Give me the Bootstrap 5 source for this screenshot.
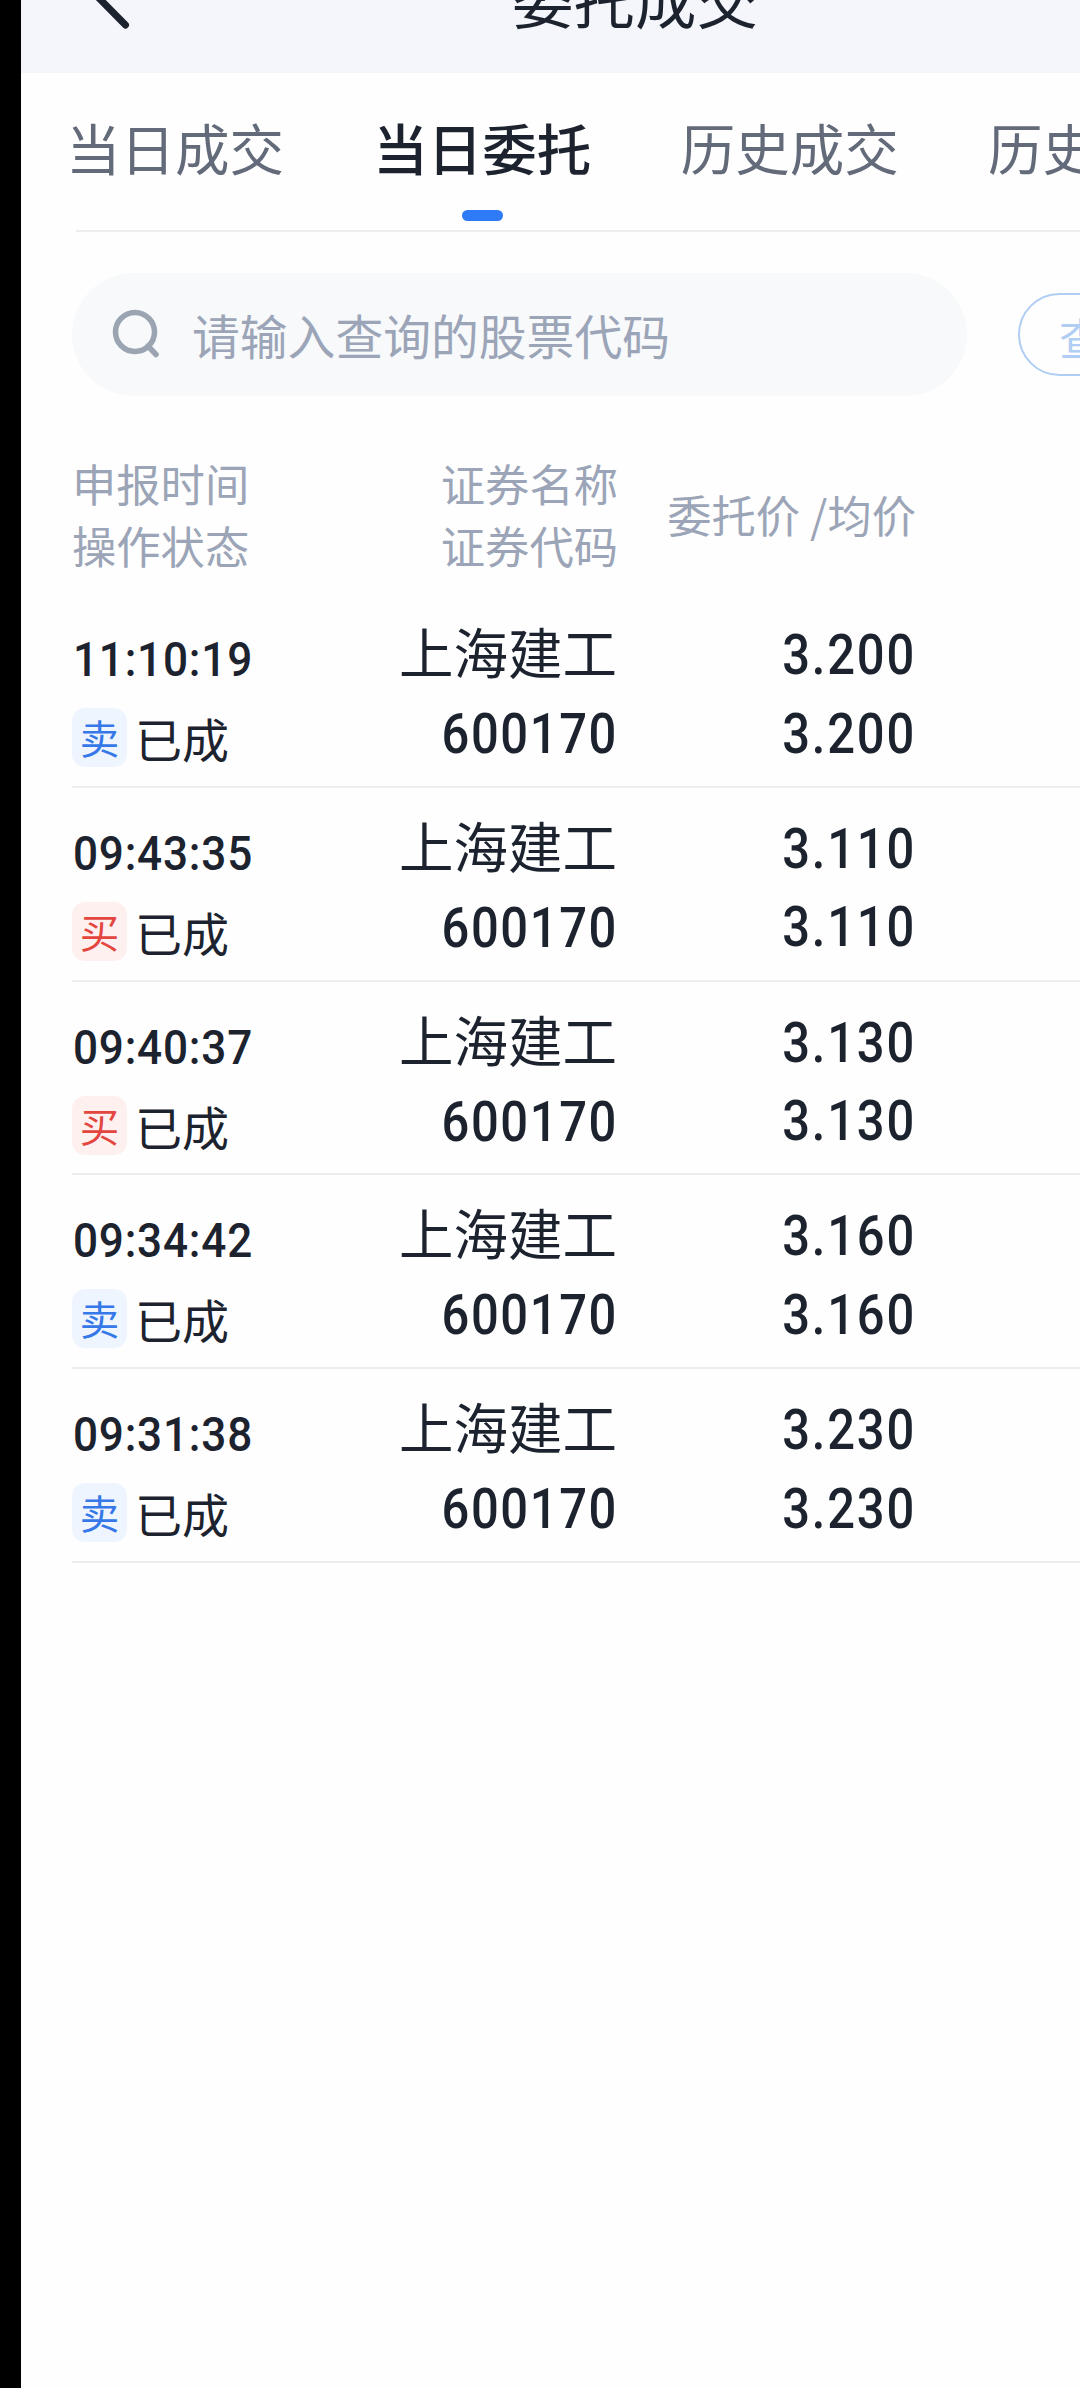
<!DOCTYPE html>
<html lang="zh-CN">
<head>
<meta charset="utf-8">
<meta name="viewport" content="width=device-width, initial-scale=1">
<title>委托成交</title>
<link href="https://cdn.jsdelivr.net/npm/bootstrap@5.3.0/dist/css/bootstrap.min.css" rel="stylesheet">
<style>
  body { background: #000; font-family: "Noto Sans CJK SC", sans-serif; color: #1c232f; overflow: hidden; }
  .screen { margin-left: 21px; height: 2388px; background: #fefefe; }
  .topbar { height: 73px; background: #f4f6fb; }
  .topbar svg { width: 60px; height: 73px; margin-left: 60px; }
  .page-title { font-size: 61.5px; line-height: 80px; margin: -42px 0 0 371px; }
  .tabs { height: 157px; padding-left: 45px; gap: 89.3px; }
  .tab { font-size: 54.5px; line-height: 60px; padding-top: 44px; color: #636b7a; border: 0; }
  .tab.active { color: #1c232f; font-weight: 500; }
  .tab .bar { width: 41px; height: 11px; border-radius: 6px; background: #2f7af6; margin-top: 33px; }
  .rule { height: 2px; background: #ededee; margin-left: 55px; }
  .search-row { padding: 41px 0 0 51px; gap: 51px; }
  .search-box { width: 895px; height: 123px; background: #f7f9fb; color: #9ba5b7; font-size: 47.8px; padding-left: 38px; gap: 30px; }
  .query-btn { width: 170px; height: 83px; border: 2px solid #b0cdf3; color: #b0cdf3; font-size: 44px; line-height: 85px; padding: 0 0 0 39px; text-align: left; }
  .cols { margin-left: 51px; }
  .c1 { width: 300px; }
  .c2 { width: 246px; }
  .c3 { width: 298px; }
  .heads { height: 142px; margin-top: 57px; margin-bottom: -1px; color: #9ba5b7; font-size: 44.3px; line-height: 61.5px; }
  .price-head { padding-top: 31px; }
  .order { height: 193.75px; border-bottom: 2px solid #ededee; }
  .stock { font-size: 54.5px; line-height: 78px; margin: 18px 1px 0 0; }
  .num { font-family: Roboto, sans-serif; font-weight: 500; font-size: 55px; line-height: 78.5px; letter-spacing: 1.8px; transform: scaleX(.89); transform-origin: right; }
  .code { margin-top: 5px; }
  .price { padding-top: 22px; letter-spacing: 2px; }
  .clock { font-family: Roboto, sans-serif; font-weight: 500; font-size: 49px; line-height: 60px; letter-spacing: .9px; transform: scaleX(.9); transform-origin: left; margin-top: 36px; padding-left: 1px; }
  .status { margin-top: 18px; }
  .side { width: 55px; height: 59px; border-radius: 13px; font-size: 39.5px; line-height: 58px; }
  .sell { background: #eff5ff; color: #3678e8; }
  .buy { background: #fff0f0; color: #e3463f; }
  .state { font-size: 47px; line-height: 59px; }
</style>
<script src="https://cdn.jsdelivr.net/npm/bootstrap@5.3.0/dist/js/bootstrap.bundle.min.js"></script>
</head>
<body>
<main class="screen overflow-hidden text-nowrap">
  <header class="topbar d-flex align-items-start overflow-hidden">
    <svg class="flex-shrink-0" viewBox="0 0 60 73" fill="none" stroke="#1c232f" stroke-width="7" stroke-linecap="round" stroke-linejoin="round"><path d="M45 -54 6 -14 44.500 25"/></svg>
    <h1 class="page-title fw-normal">委托成交</h1>
  </header>

  <nav class="tabs d-flex overflow-hidden">
    <div class="tab flex-shrink-0">当日成交</div>
    <div class="tab active flex-shrink-0 d-flex flex-column align-items-center">当日委托<span class="bar"></span></div>
    <div class="tab flex-shrink-0">历史成交</div>
    <div class="tab flex-shrink-0">历史委托</div>
  </nav>
  <div class="rule"></div>

  <div class="search-row d-flex align-items-center overflow-hidden">
    <div class="search-box rounded-pill d-flex align-items-center flex-shrink-0">
      <svg width="52" height="52" viewBox="0 0 52 52" fill="none" stroke="#9ba5b2" stroke-width="5.500"><circle cx="25" cy="23" r="19.500"/><path d="M38 37 46 45.500" stroke-linecap="round"/></svg>
      <span>请输入查询的股票代码</span>
    </div>
    <button class="query-btn btn rounded-pill flex-shrink-0">查询</button>
  </div>

  <section class="cols">
    <div class="heads d-flex align-items-start">
      <div class="c1">申报时间<br>操作状态</div>
      <div class="c2 text-end">证券名称<br>证券代码</div>
      <div class="c3 text-end price-head">委托价 /均价</div>
    </div>
    <div id="orders"></div>
  </section>
</main>
<script>
  const orders = [
    ["11:10:19", "卖", "3.200"],
    ["09:43:35", "买", "3.110"],
    ["09:40:37", "买", "3.130"],
    ["09:34:42", "卖", "3.160"],
    ["09:31:38", "卖", "3.230"]
  ];
  document.getElementById("orders").innerHTML = orders.map(([time, side, price]) => `
    <div class="order d-flex align-items-start">
      <div class="c1">
        <div class="clock">${time}</div>
        <div class="status d-flex">
          <span class="side text-center ${side === "卖" ? "sell" : "buy"}">${side}</span>
          <span class="state ms-2">已成</span>
        </div>
      </div>
      <div class="c2 text-end">
        <div class="stock">上海建工</div>
        <div class="num code">600170</div>
      </div>
      <div class="c3 text-end num price">${price}<br>${price}</div>
    </div>`).join("");
</script>
</body>
</html>
